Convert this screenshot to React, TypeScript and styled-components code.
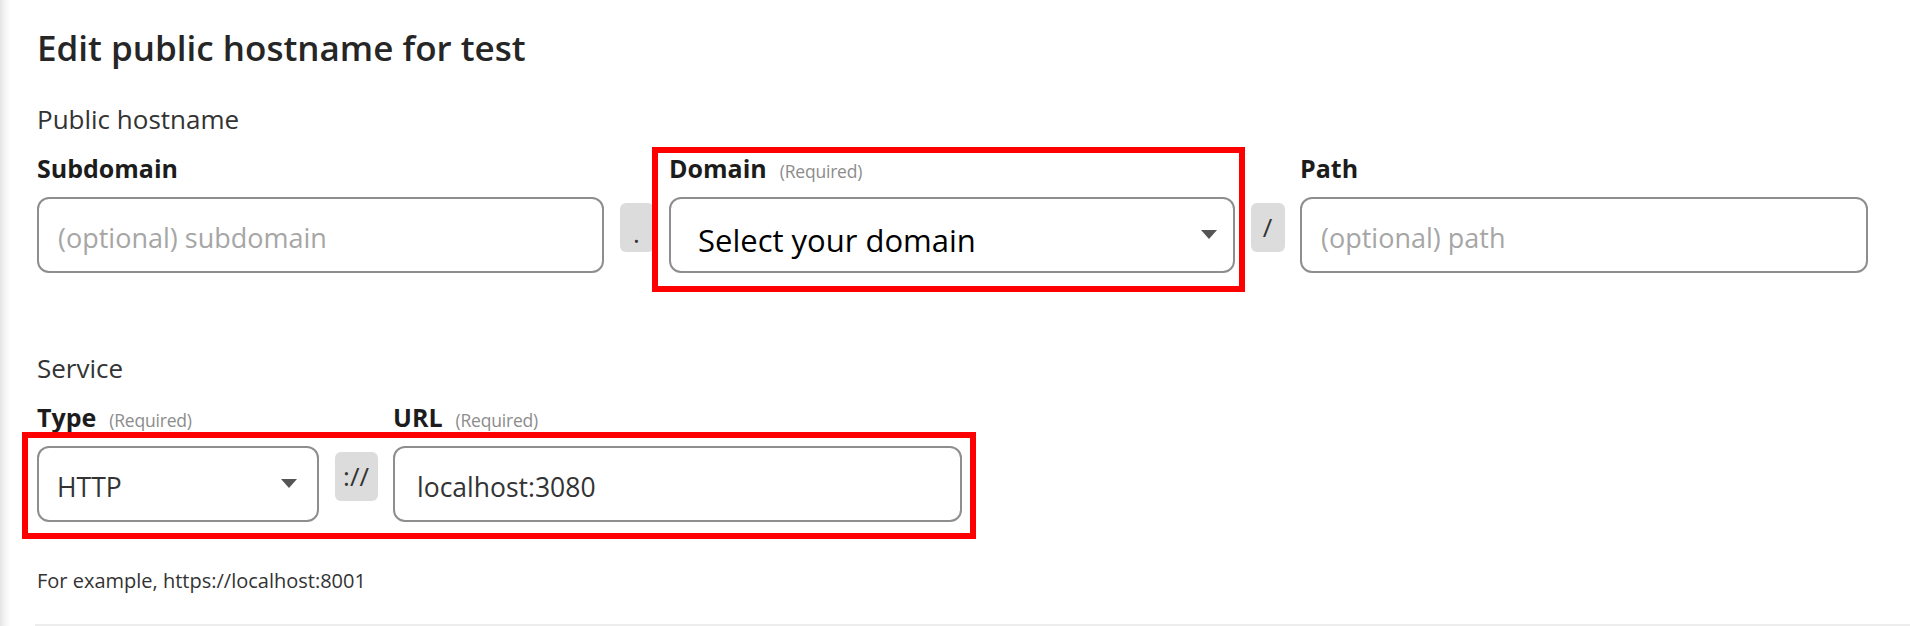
import React from "react";
import styled, { createGlobalStyle } from "styled-components";

const GlobalStyle = createGlobalStyle`
  html, body { margin: 0; padding: 0; background: #fff; }
  body { font-family: "Open Sans", "Noto Sans", sans-serif; color: #222; }
  * { box-sizing: border-box; }
`;

const Page = styled.div`
  width: 1910px;
  height: 626px;
  padding-left: 35px;
  overflow: hidden;
  background: linear-gradient(to right, #e4e4e4 0px, #f2f2f2 4px, #fbfbfb 8px, #fff 11px);
`;

const Panel = styled.section`
  height: 626px;
  padding: 26.4px 0 0 2px;
  border-bottom: 2px solid #ededed;
`;

const Title = styled.h1`
  margin: 0;
  font-size: 35px;
  line-height: 44px;
  font-weight: 600;
  color: #262626;
`;

const SectionLabel = styled.div<{ $top: number }>`
  margin-top: ${(p) => p.$top}px;
  font-size: 26px;
  line-height: 32px;
  font-weight: 400;
  color: #333;
`;

const FieldGrid = styled.div<{ $cols: string }>`
  margin-top: 18.4px;
  display: grid;
  grid-template-columns: ${(p) => p.$cols};
  grid-template-rows: 30px 76px;
  column-gap: 15.5px;
  row-gap: 13.7px;
`;

const Label = styled.label<{ $col: number }>`
  grid-row: 1;
  grid-column: ${(p) => p.$col};
  display: flex;
  align-items: baseline;
  gap: 13px;
  font-size: 25px;
  line-height: 30px;
  font-weight: 700;
  color: #1c1c1c;
  white-space: nowrap;
`;

const Required = styled.span`
  font-size: 17.5px;
  font-weight: 400;
  color: #8c8c8c;
  letter-spacing: -0.2px;
`;

const Control = styled.div<{ $col: number; $pad: number }>`
  grid-row: 2;
  grid-column: ${(p) => p.$col};
  height: 76px;
  display: flex;
  align-items: center;
  justify-content: space-between;
  padding: 6px ${(p) => p.$pad}px 0 ${(p) => p.$pad}px;
  border: 2px solid #8e8e8e;
  border-radius: 12px;
  background: #fff;
  font-size: 26.5px;
  color: #333;
`;

const Placeholder = styled.span`
  font-size: 27px;
  color: #a6a6a6;
`;

const DomainValue = styled.span`
  margin: 4px 0 0 8px;
  font-size: 31px;
  color: #000;
`;

const Caret = styled.svg<{ $right: number }>`
  width: 16px;
  height: 9px;
  margin: -6px ${(p) => p.$right}px 0 0;
  flex: none;
`;

const Joiner = styled.div<{ $col: number }>`
  grid-row: 2;
  grid-column: ${(p) => p.$col};
  align-self: start;
  margin-top: 6px;
  height: 49px;
  border-radius: 6px;
  background: #dcdcdc;
  display: flex;
  align-items: center;
  justify-content: center;
  font-size: 26px;
  color: #333;
`;

const Dot = styled.span`
  transform: translateY(6px);
`;

const Highlight = styled.div<{ $col: string; $row: string; $m: string }>`
  grid-column: ${(p) => p.$col};
  grid-row: ${(p) => p.$row};
  margin: ${(p) => p.$m};
  border: 6px solid #ff0000;
  pointer-events: none;
`;

const Helper = styled.div`
  margin-top: 47.2px;
  font-size: 20px;
  line-height: 24px;
  color: #333;
`;

const CaretIcon = ({ right }: { right: number }) => (
  <Caret $right={right} viewBox="0 0 16 9">
    <polygon points="0,0 16,0 8,9" fill="#555" />
  </Caret>
);

export default function App() {
  return (
    <>
      <GlobalStyle />
      <Page>
        <Panel>
          <Title>Edit public hostname for test</Title>

          <SectionLabel $top={32.5}>Public hostname</SectionLabel>
          <FieldGrid $cols="567px 34px 566px 34px 568px">
            <Label $col={1}>Subdomain</Label>
            <Control $col={1} $pad={19}>
              <Placeholder>(optional) subdomain</Placeholder>
            </Control>
            <Joiner $col={2}>
              <Dot>.</Dot>
            </Joiner>
            <Label $col={3}>
              Domain <Required>(Required)</Required>
            </Label>
            <Control $col={3} $pad={19}>
              <DomainValue>Select your domain</DomainValue>
              <CaretIcon right={-3} />
            </Control>
            <Joiner $col={4}>/</Joiner>
            <Label $col={5}>Path</Label>
            <Control $col={5} $pad={19}>
              <Placeholder>(optional) path</Placeholder>
            </Control>
            <Highlight $col="3" $row="1 / span 2" $m="-6.5px -10px -19px -17px" />
          </FieldGrid>

          <SectionLabel $top={78.9}>Service</SectionLabel>
          <FieldGrid $cols="282px 43px 569px">
            <Label $col={1}>
              Type <Required>(Required)</Required>
            </Label>
            <Control $col={1} $pad={18}>
              <span>HTTP</span>
              <CaretIcon right={2} />
            </Control>
            <Joiner $col={2}>://</Joiner>
            <Label $col={3}>
              URL <Required>(Required)</Required>
            </Label>
            <Control $col={3} $pad={22}>
              <span>localhost:3080</span>
            </Control>
            <Highlight $col="1 / -1" $row="2" $m="-14px -14px -17px -15px" />
          </FieldGrid>

          <Helper>For example, https://localhost:8001</Helper>
        </Panel>
      </Page>
    </>
  );
}
